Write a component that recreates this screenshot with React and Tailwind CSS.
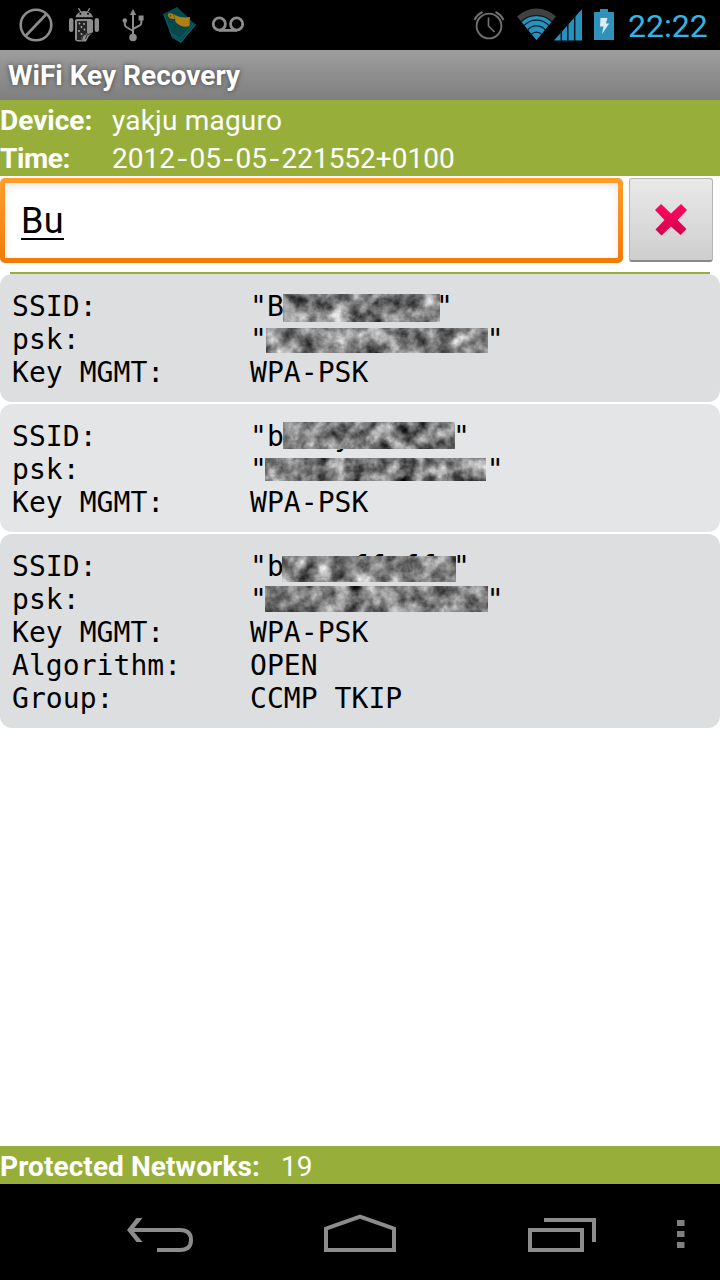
import React from "react";

const mono = "font-['DejaVu_Sans_Mono',monospace]";

function StatusBar() {
  return (
    <header className="relative flex h-[50px] w-full shrink-0 bg-black">
      <svg width="620" height="50" viewBox="0 0 620 50" fill="none" className="shrink-0">
        <g stroke="#8c8c8c" strokeWidth="2.6">
          <circle cx="36" cy="25" r="15.3" />
          <path d="M25.5 36 46.5 14" />
        </g>
        <g fill="#8c8c8c">
          <path d="M75.5 17.2a8.8 7.2 0 0 1 17.4 0z" />
          <rect x="69" y="18" width="4.4" height="14" rx="2.2" />
          <rect x="94.6" y="18" width="4.4" height="14" rx="2.2" />
          <path d="M77 19h13.5q2.5 0 2.5 2.5V32l-4 4-3 5.5H78q-3 0-3-3V21q0-2 2-2z" />
        </g>
        <path d="m78.5 8.2 2.3 3.8M89.8 8.2 87.5 12" stroke="#8c8c8c" strokeWidth="1.3" />
        <g fill="#000">
          <circle cx="80.4" cy="13.7" r="1" />
          <circle cx="88" cy="13.7" r="1" />
          <path d="M77 22q0-1 1-1h9v12l-5 3-1 4h-4z" opacity=".75" />
        </g>
        <g fill="#b4b4b4">
          <circle cx="79.5" cy="23.5" r=".9" />
          <circle cx="84" cy="24" r=".9" />
          <circle cx="81.5" cy="27" r=".9" />
          <circle cx="79" cy="31" r=".9" />
          <circle cx="84.5" cy="29.500" r=".9" />
          <circle cx="81.5" cy="34" r=".9" />
        </g>
        <path d="M87.500 33.500l-4.500 2-1.500 5M92 33l-5 2-1.500 4" stroke="#222" strokeWidth=".9" />
        <g stroke="#8c8c8c" strokeWidth="2">
          <path d="M133 14v22M124.8 21v3.5q0 1.5 1.5 2.5l6.7 4M141.3 19v4q0 1.5-1.5 2.5L133 29" />
        </g>
        <g fill="#8c8c8c">
          <path d="m133 9 3.3 6h-6.600z" />
          <circle cx="133" cy="37.5" r="3.8" />
          <circle cx="124.8" cy="20.5" r="2.3" />
          <path d="M138.600 15.500h5v5h-5z" />
        </g>
        <path d="m163 14 14-7 19 18-15 18-9-5z" fill="#06484c" />
        <path d="m171 35 10 7 14.500-17.500M169.500 32l10.500 7 14-16" stroke="#0a686c" strokeWidth="1" />
        <path d="m164 14 8 21" stroke="#0a5a5e" strokeWidth="1.200" />
        <path d="M168.500 13.500q2.500-1 4.500.7 7.500 4.300 17 2.800l-.5 9q-7.500 2.500-14-4l-.5-3.500q-4 1.500-6.500-1.500-1.500-2 0-3.500z" fill="#b07f14" />
        <path d="M175 18.500q-.5-2-2-3.500" stroke="#7d5a10" strokeWidth=".9" />
        <circle cx="170.3" cy="15.8" r="1" fill="#5c4310" />
        <g stroke="#8c8c8c" strokeWidth="2.8">
          <circle cx="219.3" cy="24" r="6.100" />
          <circle cx="236.6" cy="24" r="6.100" />
          <path d="M219 30.400h18" />
        </g>
        <g stroke="#707070" strokeWidth="1.9">
          <circle cx="489" cy="26" r="12.4" />
          <path d="M488.500 17.500V26l6 6" strokeWidth="1.7" />
          <path d="M474.500 20a17 17 0 0 1 8-8M503.500 20a17 17 0 0 0-8-8" strokeWidth="2" />
        </g>
        <path d="M536.500 40 517 16.500a28 28 0 0 1 39 0z" fill="#414141" />
        <path d="M536.500 40 521.600 22a21.500 21.500 0 0 1 29.800 0z" fill="#2892bf" />
        <g stroke="#07202c" strokeWidth="1.3">
          <path d="M521 22a21.500 21.500 0 0 1 31 0M524 25.600a17 17 0 0 1 25 0M527.500 30a12 12 0 0 1 18 0M531 34.500a7.500 7.500 0 0 1 11 0" />
        </g>
        <path d="M554 40.500 582 9v31.500z" fill="#2892bf" />
        <path d="M561.300 30v11M567.800 22v19M574.700 14v27" stroke="#041820" strokeWidth="1.5" />
        <path d="M600 9h8v3h6v28h-20V12h6z" fill="#3092ba" />
        <path d="M600.500 18h7l-1.600 5.500h3.300L602 34l1.500-7.500H600z" fill="#dcecf4" />
      </svg>
      <div className="absolute left-[628px] top-[7px] whitespace-nowrap font-[Roboto,sans-serif] text-[32px] font-normal leading-[38px] text-[#33b5e5]">
        22:22
      </div>
    </header>
  );
}

function Noise({ id, seed, className }) {
  return (
    <svg className={className}>
      <filter id={id} x="0" y="0" width="100%" height="100%" colorInterpolationFilters="sRGB">
        <feTurbulence type="fractalNoise" baseFrequency="0.06" numOctaves="4" seed={seed} />
        <feColorMatrix values="0.85 0.85 0 0 -0.35  0.85 0.85 0 0 -0.35  0.85 0.85 0 0 -0.35  0 0 0 0 1" />
      </filter>
      <rect width="100%" height="100%" filter={`url(#${id})`} />
    </svg>
  );
}

function Row({ label, children }) {
  return (
    <div className="flex h-[33px] whitespace-pre">
      <dt className="w-[238px] shrink-0">{label}</dt>
      <dd className="relative">{children}</dd>
    </div>
  );
}

const networks = [
  {
    tone: "bg-[#dddee0]",
    ssid: '"B   y     "',
    psk: '"             "',
    ssidMask: "absolute left-[33px] top-[4px] h-[28px] w-[157px]",
    pskMask: "absolute left-[16px] top-[5px] h-[25px] w-[222px]",
    rest: [["Key MGMT:", "WPA-PSK"]],
  },
  {
    tone: "bg-[#e4e5e7]",
    ssid: '"b   y      "',
    psk: '"             "',
    ssidMask: "absolute left-[33px] top-[2px] h-[27px] w-[172px]",
    pskMask: "absolute left-[15px] top-[5px] h-[23px] w-[221px]",
    rest: [["Key MGMT:", "WPA-PSK"]],
  },
  {
    tone: "bg-[#dddee0]",
    ssid: '"b   yff ff "',
    psk: '"             "',
    ssidMask: "absolute left-[32px] top-[6px] h-[26px] w-[174px]",
    pskMask: "absolute left-[15px] top-[3px] h-[26px] w-[223px]",
    rest: [["Key MGMT:", "WPA-PSK"], ["Algorithm:", "OPEN"], ["Group:", "CCMP TKIP"]],
  },
];

function NetworkCard({ net, index }) {
  return (
    <li className={`rounded-[12px] pl-3 pt-4 pb-[13px] ${net.tone}`}>
      <dl className={`${mono} text-[28px] leading-[33px] tracking-[0.06px] text-black`}>
        <Row label="SSID:">
          {net.ssid}
          <Noise id={`ssid-${index}`} seed={index * 7 + 3} className={net.ssidMask} />
        </Row>
        <Row label="psk:">
          {net.psk}
          <Noise id={`psk-${index}`} seed={index * 5 + 11} className={net.pskMask} />
        </Row>
        {net.rest.map(([k, v]) => (
          <Row key={k} label={k}>{v}</Row>
        ))}
      </dl>
    </li>
  );
}

function NavBar() {
  return (
    <nav className="h-24 shrink-0 bg-black">
      <svg width="720" height="96" viewBox="0 0 720 96" fill="none" stroke="#8c8c8c" strokeWidth="4">
        <path d="M157 66h23q11 0 11-10t-11-10h-49" />
        <path d="M136.500 34h6l-10 12 10 12h-6L127 46z" fill="#8c8c8c" stroke="none" />
        <path d="M326 66V44.700L360 32.500l34 12.200V66z" />
        <path d="M530 46h52v20h-52zM544 36h50v22" />
        <path d="M677 39h7.500M677 50h7.500M677 61h7.500" stroke="#808080" strokeWidth="6" />
      </svg>
    </nav>
  );
}

function Dash() {
  return <span className="inline-block w-[14.5px] scale-x-125 text-center">-</span>;
}

export default function App() {
  return (
    <div className="flex h-[1280px] w-[720px] flex-col overflow-hidden bg-white font-[Roboto,sans-serif]">
      <StatusBar />
      <h1 className="flex h-[50px] shrink-0 items-center bg-linear-to-b from-[#9d9d9d] to-[#7f7f7f] pl-2 pt-[2px] text-[28px] font-bold text-white [text-shadow:0_0_5px_#444]">
        WiFi Key Recovery
      </h1>
      <section className="shrink-0 bg-[#97af3a] text-[28px] leading-[42px] text-white">
        <div className="flex h-[38px]">
          <b className="w-28 shrink-0">Device:</b>
          <span className="tracking-[0.2px]">yakju maguro</span>
        </div>
        <div className="flex h-[38px]">
          <b className="w-28 shrink-0 tracking-[-0.4px]">Time:</b>
          <span>2012<Dash />05<Dash />05<Dash />221552+0100</span>
        </div>
      </section>
      <div className="flex h-[96px] shrink-0 gap-[6px] pt-[2px]">
        <div className="h-[85px] w-[623px] rounded-[5px] bg-linear-to-b from-[#ff9e2b] to-[#f27906] p-[5px]">
          <div className="flex h-full items-center bg-white pl-4 shadow-[inset_0_3px_8px_#e9e9e9]">
            <span className="h-[38px] border-b-2 border-black text-[36px] leading-[38px] tracking-[0.4px] text-black">Bu</span>
          </div>
        </div>
        <button className="flex h-[84px] w-[84px] items-center justify-center rounded-[3px] border border-b-2 border-[#b5b5b5] border-b-[#888] bg-linear-to-b from-[#e9e9e9] to-[#cecece] pr-px">
          <svg width="34" height="34" viewBox="0 0 34 34">
            <defs>
              <linearGradient id="cross" x1="0" y1="0" x2="0" y2="1">
                <stop stopColor="#ff0860" />
                <stop offset="1" stopColor="#d3004b" />
              </linearGradient>
            </defs>
            <path d="m7 1 10 9.500L27 1l6 6-9.500 10 9 9-6 6L17 23.500 7.500 32.500l-6-6L10.500 17 1 7z" fill="url(#cross)" />
          </svg>
        </button>
      </div>
      <div className="mx-[10px] h-[2px] shrink-0 bg-[#97af3a]" />
      <ul className="flex flex-1 flex-col gap-[2px]">
        {networks.map((net, i) => (
          <NetworkCard key={i} net={net} index={i} />
        ))}
      </ul>
      <footer className="flex h-[38px] shrink-0 bg-[#97af3a] text-[28px] leading-[42px] text-white">
        <b className="w-[281px] tracking-[0.08px]">Protected Networks:</b>
        <span>19</span>
      </footer>
      <NavBar />
    </div>
  );
}
